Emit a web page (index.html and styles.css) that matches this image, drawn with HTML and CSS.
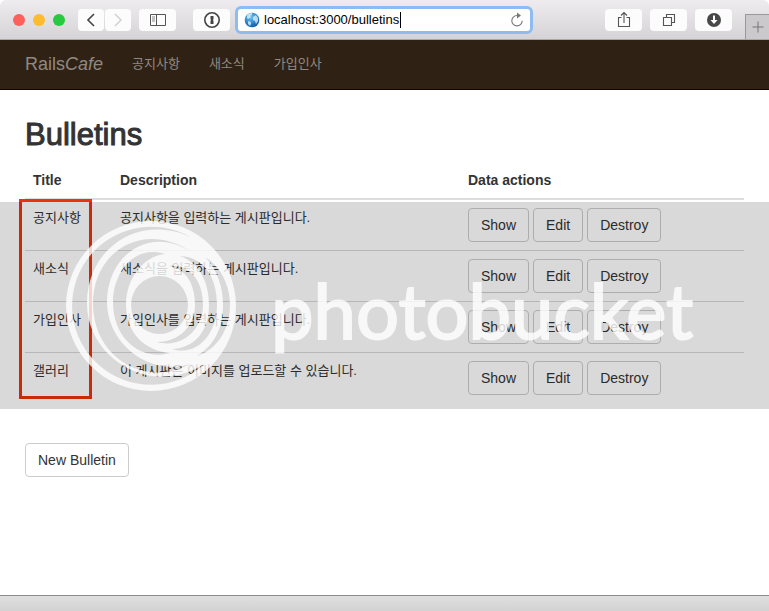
FILE: index.html
```html
<!DOCTYPE html>
<html lang="ko">
<head>
<meta charset="utf-8">
<meta name="viewport" content="width=device-width, initial-scale=1">
<title>RailsCafe</title>
<link rel="stylesheet" href="styles.css">
</head>
<body>
<header class="toolbar">
  <div class="lights">
    <span class="light red"></span><span class="light yellow"></span><span class="light green"></span>
  </div>
  <div class="history">
    <button class="tool" type="button" aria-label="Back"><svg width="26" height="22" viewBox="0 0 26 22"><path d="M16 5l-6 6 6 6" fill="none" stroke="#444" stroke-width="1.6"/></svg></button>
    <button class="tool" type="button" aria-label="Forward"><svg width="26" height="22" viewBox="0 0 26 22"><path d="M10 5l6 6-6 6" fill="none" stroke="#ccc" stroke-width="1.3"/></svg></button>
  </div>
  <button class="tool wide" type="button" aria-label="Sidebar"><svg width="16" height="14" viewBox="0 0 16 14"><g fill="none" stroke="#555"><path d="M.5 1.500h15v11H.5zM6.500 1.500v11"/><path d="M2 4h3M2 6h3M2 8h3" stroke="#888"/></g></svg></button>
  <button class="tool wide password" type="button" aria-label="Passwords"><svg width="18" height="18" viewBox="0 0 18 18"><circle cx="9" cy="9" r="7.200" fill="none" stroke="#444" stroke-width="1.600"/><path d="M7.500 5h3v3.200l-.7.800.7.800V13h-3V9.800l.7-.8-.7-.8z" fill="#444"/></svg></button>
  <div class="address">
    <svg width="16" height="16" viewBox="0 0 16 16" aria-hidden="true"><defs><radialGradient id="sea" cx=".4" cy=".3" r=".8"><stop offset="0" stop-color="#73c3f2"/><stop offset=".6" stop-color="#237fca"/><stop offset="1" stop-color="#124b91"/></radialGradient></defs><circle cx="8" cy="8" r="7.300" fill="url(#sea)"/><path d="M3 3Q5 1 8 1L8 3 6 4 7 5 4 7 3 6zM9 5L12 3 14 6 14 9 12 12 11 9 9 8zM4 9L7 10 7 12 6 14 4 12z" fill="#dceff0" opacity=".8"/></svg>
    <input class="url" type="text" aria-label="Address" value="localhost:3000/bulletins" spellcheck="false">
    <button class="reload" type="button" aria-label="Reload"><svg width="14" height="16" viewBox="0 0 14 16"><path d="M8 3.500H7A5.200 5.200 0 1 0 12.200 8.700" fill="none" stroke="#777" stroke-width="1.100"/><path d="M7 .5L11 3.500 7 6.500z" fill="#777"/></svg></button>
  </div>
  <div class="actions">
    <button class="tool wide" type="button" aria-label="Share"><svg width="14" height="18" viewBox="0 0 14 18"><path d="M4.500 6.500h-3v9h11v-9h-3M7 12V2M4 4.500l3-3 3 3" fill="none" stroke="#555" stroke-width="1.100"/></svg></button>
    <button class="tool wide" type="button" aria-label="Tabs"><svg width="14" height="14" viewBox="0 0 14 14"><path d="M1.500 4.500h8v8h-8zM4.500 4V1.500h8v8H10" fill="none" stroke="#555" stroke-width="1.100"/></svg></button>
    <button class="tool wide" type="button" aria-label="Downloads"><svg width="16" height="16" viewBox="0 0 16 16"><circle cx="8" cy="8" r="7" fill="#484848"/><path d="M7 3.500h2v4.500h2.500L8 12 4.500 8H7z" fill="#fff"/></svg></button>
  </div>
  <button class="new-tab" type="button" aria-label="New tab"><svg width="12" height="12" viewBox="0 0 12 12"><path d="M6 .5v11M.5 6h11" stroke="#777"/></svg></button>
</header>

<nav class="navbar">
  <a class="brand" href="#">Rails<em>Cafe</em></a>
  <a class="nav-link" href="#">공지사항</a>
  <a class="nav-link" href="#">새소식</a>
  <a class="nav-link" href="#">가입인사</a>
</nav>

<main class="content">
  <h1>Bulletins</h1>
  <div class="listing">
    <table>
      <colgroup><col class="col-title"><col class="col-description"><col></colgroup>
      <thead><tr><th scope="col">Title</th><th scope="col">Description</th><th scope="col">Data actions</th></tr></thead>
      <tbody>
        <tr><td>공지사항</td><td>공지사항을 입력하는 게시판입니다.</td><td><div class="row-actions"><a class="btn" href="#">Show</a><a class="btn" href="#">Edit</a><a class="btn" href="#">Destroy</a></div></td></tr>
        <tr><td>새소식</td><td>새소식을 입력하는 게시판입니다.</td><td><div class="row-actions"><a class="btn" href="#">Show</a><a class="btn" href="#">Edit</a><a class="btn" href="#">Destroy</a></div></td></tr>
        <tr><td>가입인사</td><td>가입인사를 입력하는 게시판입니다.</td><td><div class="row-actions"><a class="btn" href="#">Show</a><a class="btn" href="#">Edit</a><a class="btn" href="#">Destroy</a></div></td></tr>
        <tr><td>갤러리</td><td>이 게시판은 이미지를 업로드할 수 있습니다.</td><td><div class="row-actions"><a class="btn" href="#">Show</a><a class="btn" href="#">Edit</a><a class="btn" href="#">Destroy</a></div></td></tr>
      </tbody>
    </table>
    <div class="highlight"></div>
  </div>
  <a class="btn" href="#">New Bulletin</a>
</main>

<footer class="statusbar"></footer>

<div class="watermark">
  <svg class="rings" width="172" height="172" viewBox="65 221 172 172" aria-hidden="true">
    <path fill="#fff" fill-rule="evenodd" d="M66 307a85 85 0 1 0 170 0a85 85 0 1 0-170 0z
      M190 238A79 79 0 1 0 205 364.500C150 400 87 358 87 305C87 248 140 215 190 238z
      M190 252C143 222 93 252 93 305C93 358 145 390 190 365C150 378 107 345 107 303C107 258 147 226 190 252z
      M165 255C133 245 113 275 113 303C113 342 143 362 170 354C145 352 126 334 126 306C126 280 143 257 165 255z
      M169 267C187 270 195 286 195 306C195 326 180 343 157 343C182 350 203 330 203 306C203 282 190 265 169 267z
      M180 257C200 264 209 284 209 306C209 332 195 349 172 350C198 358 217 334 217 306C217 280 205 258 180 257z
      M205 258C217 270 223 288 223 306C223 328 215 346 197 357C219 350 230 328 230 306C230 286 221 268 205 258z
      M131 306a28.500 29 0 1 0 57 0a28.500 29 0 1 0-57 0z"/>
  </svg>
  <span class="wordmark">photobucket</span>
</div>
</body>
</html>
```

FILE: styles.css
```css
* { box-sizing: border-box; }

body {
  margin: 0;
  min-height: 100vh;
  display: flex;
  flex-direction: column;
  background: #fff;
  color: #333;
  font: 14px/20px "Liberation Sans", "Noto Sans CJK KR", sans-serif;
}

a { color: inherit; text-decoration: none; }
button { border: 0; padding: 0; font: inherit; }
svg { display: block; }

.toolbar {
  display: flex;
  align-items: center;
  height: 40px;
  padding-left: 13px;
  background: linear-gradient(#eeecee, #d5d3d5);
  border-bottom: 1px solid #aaa6a2;
  border-radius: 6px 6px 0 0;
}
.lights { display: flex; gap: 8px; margin-right: 13px; }
.light { width: 12px; height: 12px; border-radius: 50%; }
.red { background: #fc605c; }
.yellow { background: #fdbc2f; }
.green { background: #28c941; }
.history { display: flex; gap: 1px; margin-right: 8px; }
.tool {
  display: flex;
  align-items: center;
  justify-content: center;
  height: 22px;
  border-radius: 4px;
  background: #fcfcfc;
}
.wide { width: 37px; }
.password { margin: 0 5px 0 17px; }
.address {
  flex: 0 1 298px;
  display: flex;
  align-items: center;
  height: 28px;
  padding: 0 6px;
  border: 3px solid #8fbcf0;
  border-radius: 6px;
  background: #fff;
}
.url {
  width: 137px;
  height: 16px;
  margin: 0 auto 0 4px;
  padding: 0;
  border: 0;
  border-right: 1px solid #000;
  outline: 0;
  background: none;
  color: #000;
  font: 13px/16px "Liberation Sans", sans-serif;
}
.reload { background: none; }
.actions { display: flex; gap: 8px; margin-left: auto; }
.new-tab {
  display: flex;
  align-items: center;
  justify-content: center;
  align-self: flex-end;
  width: 24px;
  height: 25px;
  margin-left: 13px;
  border: 1px solid #999;
  border-width: 1px 0 0 1px;
  background: #cbc9cb;
}

.navbar {
  display: flex;
  align-items: center;
  gap: 29px;
  height: 50px;
  padding: 0 25px 2px;
  background: #2f2214;
  border-bottom: 1px solid #100800;
  color: #8f8983;
}
.brand { font-size: 18px; }
.nav-link { font-size: 13px; }

.content { flex: 1; padding: 29px 25px; }
h1 {
  margin: 0 0 11px;
  font-size: 31px;
  font-weight: 400;
  line-height: 32px;
  -webkit-text-stroke: 1px;
}
.listing { position: relative; margin-bottom: 40px; }
table {
  width: 100%;
  table-layout: fixed;
  border-collapse: separate;
  border-spacing: 0;
}
.col-title { width: 87px; }
.col-description { width: 348px; }
th, td { padding: 8px; text-align: left; vertical-align: top; }
th { border-bottom: 2px solid #ddd; }
td { font-size: 13px; }
tr + tr td { border-top: 1px solid #d8d8d8; }
.row-actions { display: flex; gap: 4px; font-size: 14px; }
.btn {
  display: inline-block;
  padding: 6px 12px;
  border: 1px solid #ccc;
  border-radius: 4px;
  background: #fff;
}
.highlight {
  position: absolute;
  top: 37px;
  bottom: 4px;
  left: -6px;
  width: 73px;
  border: 3px solid #eb3309;
}

.statusbar {
  height: 16px;
  background: linear-gradient(#dfdfdf, #d2d2d2);
  border-top: 1px solid #8c8c8c;
}

.watermark {
  position: fixed;
  top: 202px;
  left: 0;
  right: 0;
  display: flex;
  align-items: center;
  gap: 34px;
  height: 207px;
  padding-left: 65px;
  background: rgba(0, 0, 0, .15);
  pointer-events: none;
}
.rings, .wordmark { flex: none; opacity: .8; }
.wordmark {
  padding-top: 8px;
  color: #fff;
  font: 76px/88px Lato, sans-serif;
  -webkit-text-stroke: 2px;
}
```
